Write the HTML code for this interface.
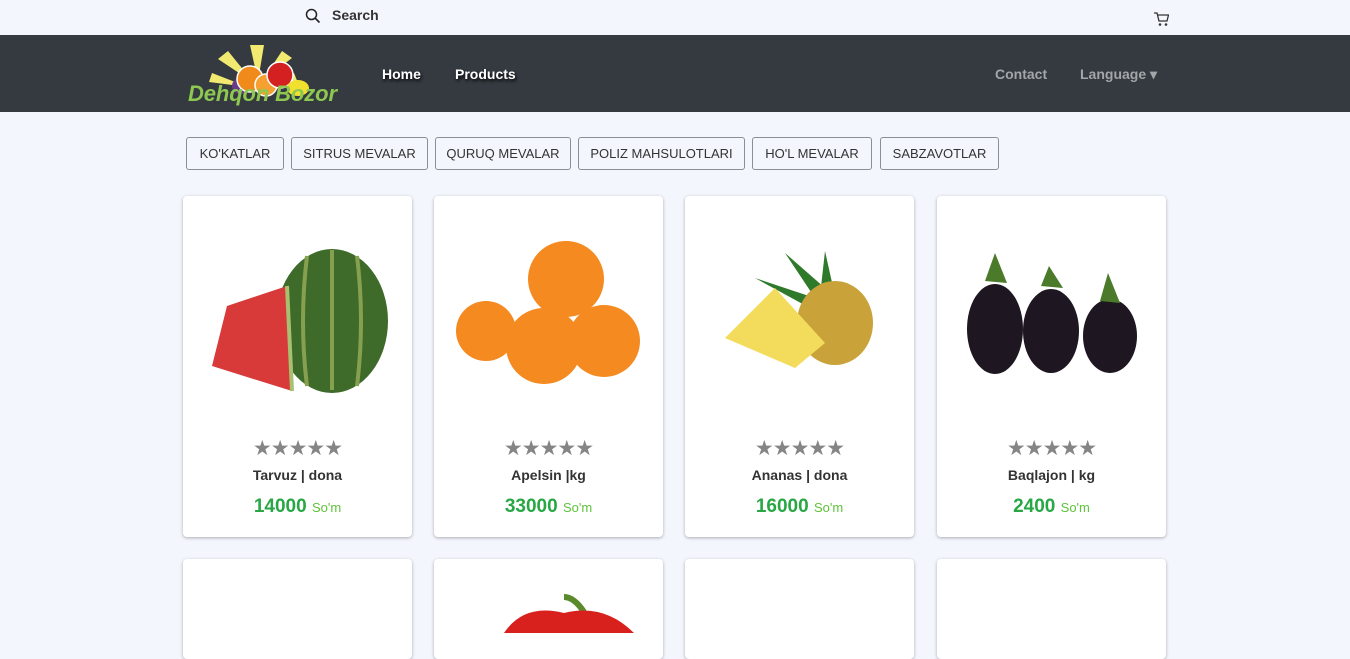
<!DOCTYPE html>
<html><head><style>
*{margin:0;padding:0;box-sizing:border-box}
body{width:1350px;height:632px;overflow:hidden;background:#f3f6fd;font-family:"Liberation Sans",sans-serif;position:relative}
.top{position:absolute;top:0;left:0;width:1350px;height:35px;background:#f3f6fd}
.nav{position:absolute;top:35px;left:0;width:1350px;height:77px;background:#343a40}
.nav a{position:absolute;top:31px;font-size:14px;font-weight:bold;color:#fff;text-shadow:1px 2px 3px #000}
.nav .g{color:#a3a6a9;text-shadow:none}
.btn{position:absolute;top:137px;height:33px;border:1px solid #8a8f94;border-radius:3px;background:#f3f6fd;font-size:13px;color:#333;line-height:31px;text-align:center}
.card{position:absolute;width:229px;background:#fff;border-radius:4px;box-shadow:0 1px 3px rgba(0,0,0,.3)}
.stars{position:absolute;top:240px;width:100%;text-align:center;color:#858585;font-size:21px;letter-spacing:-1px}
.nm{position:absolute;top:271px;width:100%;text-align:center;font-size:14px;font-weight:bold;color:#333}
.pr{position:absolute;top:300px;width:100%;text-align:center;font-size:19px;font-weight:bold;color:#28a745}
.pr span{font-size:13px;font-weight:normal;color:#5ec43a}
</style></head><body>
<div class="top">
<svg style="position:absolute;left:305px;top:8px" width="16" height="16" viewBox="0 0 16 16"><circle cx="6.5" cy="6.5" r="5" fill="none" stroke="#222" stroke-width="1.5"/><path d="M10 10l4.5 4.5" stroke="#222" stroke-width="1.6"/></svg>
<span style="position:absolute;left:332px;top:7px;font-size:14px;font-weight:bold;color:#333">Search</span>
<svg style="position:absolute;left:1153px;top:12px" width="16" height="15" viewBox="0 0 16 15"><path d="M1 1h3l2 8h8l1.5-6H5" fill="none" stroke="#333" stroke-width="1.3"/><circle cx="7" cy="12.5" r="1.3" fill="#333"/><circle cx="13" cy="12.5" r="1.3" fill="#333"/></svg>
</div>
<div class="nav">
<svg style="position:absolute;left:186px;top:8px" width="156" height="64" viewBox="0 0 156 64">
<g fill="#f2ea70"><path d="M72 38L64 2h14z"/><path d="M76 38l20-30 10 7z"/><path d="M68 40L42 8l-10 8z"/><path d="M80 42l28-12 4 10z"/><path d="M62 44L26 30l-3 9z"/></g>
<circle cx="54" cy="43" r="8" fill="#6a3a8a"/>
<circle cx="64" cy="36" r="13" fill="#f08a1a" stroke="#fff" stroke-width="1.5"/><circle cx="80" cy="42" r="11" fill="#f5a030" stroke="#fff" stroke-width="1.5"/><circle cx="94" cy="32" r="13" fill="#d42020" stroke="#fff" stroke-width="1.5"/><ellipse cx="112" cy="45" rx="11" ry="8" fill="#f2e030"/>
<text x="2" y="58" font-size="22" font-weight="bold" font-style="italic" fill="#8ec850" font-family="Liberation Sans" letter-spacing="1" textLength="150">Dehqon Bozor</text>
</svg>
<a style="left:382px">Home</a><a style="left:455px">Products</a>
<a class="g" style="left:995px">Contact</a><a class="g" style="left:1080px">Language ▾</a>
</div>
<div class="btn" style="left:186px;width:98px">KO'KATLAR</div>
<div class="btn" style="left:291px;width:137px">SITRUS MEVALAR</div>
<div class="btn" style="left:435px;width:136px">QURUQ MEVALAR</div>
<div class="btn" style="left:578px;width:167px">POLIZ MAHSULOTLARI</div>
<div class="btn" style="left:752px;width:120px">HO'L MEVALAR</div>
<div class="btn" style="left:880px;width:119px">SABZAVOTLAR</div>

<div class="card" style="left:183px;top:196px;height:341px">
<svg style="position:absolute;left:24px;top:50px" width="184" height="150"><ellipse cx="125" cy="75" rx="56" ry="72" fill="#3f6b2a"/><path d="M80 40 L20 60 L5 120 L85 145z" fill="#d83a3a"/><path d="M80 40L85 145" stroke="#a8c070" stroke-width="4"/><g stroke="#86a050" stroke-width="4" fill="none"><path d="M100 10q-8 65 0 130"/><path d="M125 4v140"/><path d="M150 10q8 65 0 130"/></g></svg>
<div class="stars">★★★★★</div><div class="nm">Tarvuz | dona</div><div class="pr">14000 <span>So'm</span></div></div>
<div class="card" style="left:434px;top:196px;height:341px">
<svg style="position:absolute;left:20px;top:45px" width="190" height="150"><g fill="#f58a20"><circle cx="112" cy="38" r="38"/><circle cx="32" cy="90" r="30"/><circle cx="150" cy="100" r="36"/><circle cx="90" cy="105" r="38"/></g></svg>
<div class="stars">★★★★★</div><div class="nm">Apelsin |kg</div><div class="pr">33000 <span>So'm</span></div></div>
<div class="card" style="left:685px;top:196px;height:341px">
<svg style="position:absolute;left:40px;top:52px" width="150" height="122"><g fill="#2f7a2a"><path d="M90 50L60 5l40 35z"/><path d="M90 50L30 30l55 30z"/><path d="M95 48l5-45 10 45z"/></g><ellipse cx="110" cy="75" rx="38" ry="42" fill="#c9a23a"/><path d="M0 90L50 40L100 95L70 120z" fill="#f3dc5c"/></svg>
<div class="stars">★★★★★</div><div class="nm">Ananas | dona</div><div class="pr">16000 <span>So'm</span></div></div>
<div class="card" style="left:937px;top:196px;height:341px">
<svg style="position:absolute;left:28px;top:55px" width="180" height="125"><g fill="#1e1620"><ellipse cx="30" cy="78" rx="28" ry="45"/><ellipse cx="86" cy="80" rx="28" ry="42"/><ellipse cx="145" cy="85" rx="27" ry="37"/></g><g fill="#4a7a2a"><path d="M20 30l10-28 12 30z"/><path d="M76 35l8-20 14 22z"/><path d="M135 50l8-28 12 30z"/></g></svg>
<div class="stars">★★★★★</div><div class="nm">Baqlajon | kg</div><div class="pr">2400 <span>So'm</span></div></div>

<div class="card" style="left:183px;top:559px;height:100px"></div>
<div class="card" style="left:434px;top:559px;height:100px"><svg style="position:absolute;left:40px;top:34px" width="160" height="40"><path d="M90 4q10 0 20 15" stroke="#5a8a2a" stroke-width="6" fill="none"/><path d="M30 40q20-30 60-20q40-10 70 20z" fill="#d8201c"/></svg></div>
<div class="card" style="left:685px;top:559px;height:100px"></div>
<div class="card" style="left:937px;top:559px;height:100px"></div>
</body></html>
